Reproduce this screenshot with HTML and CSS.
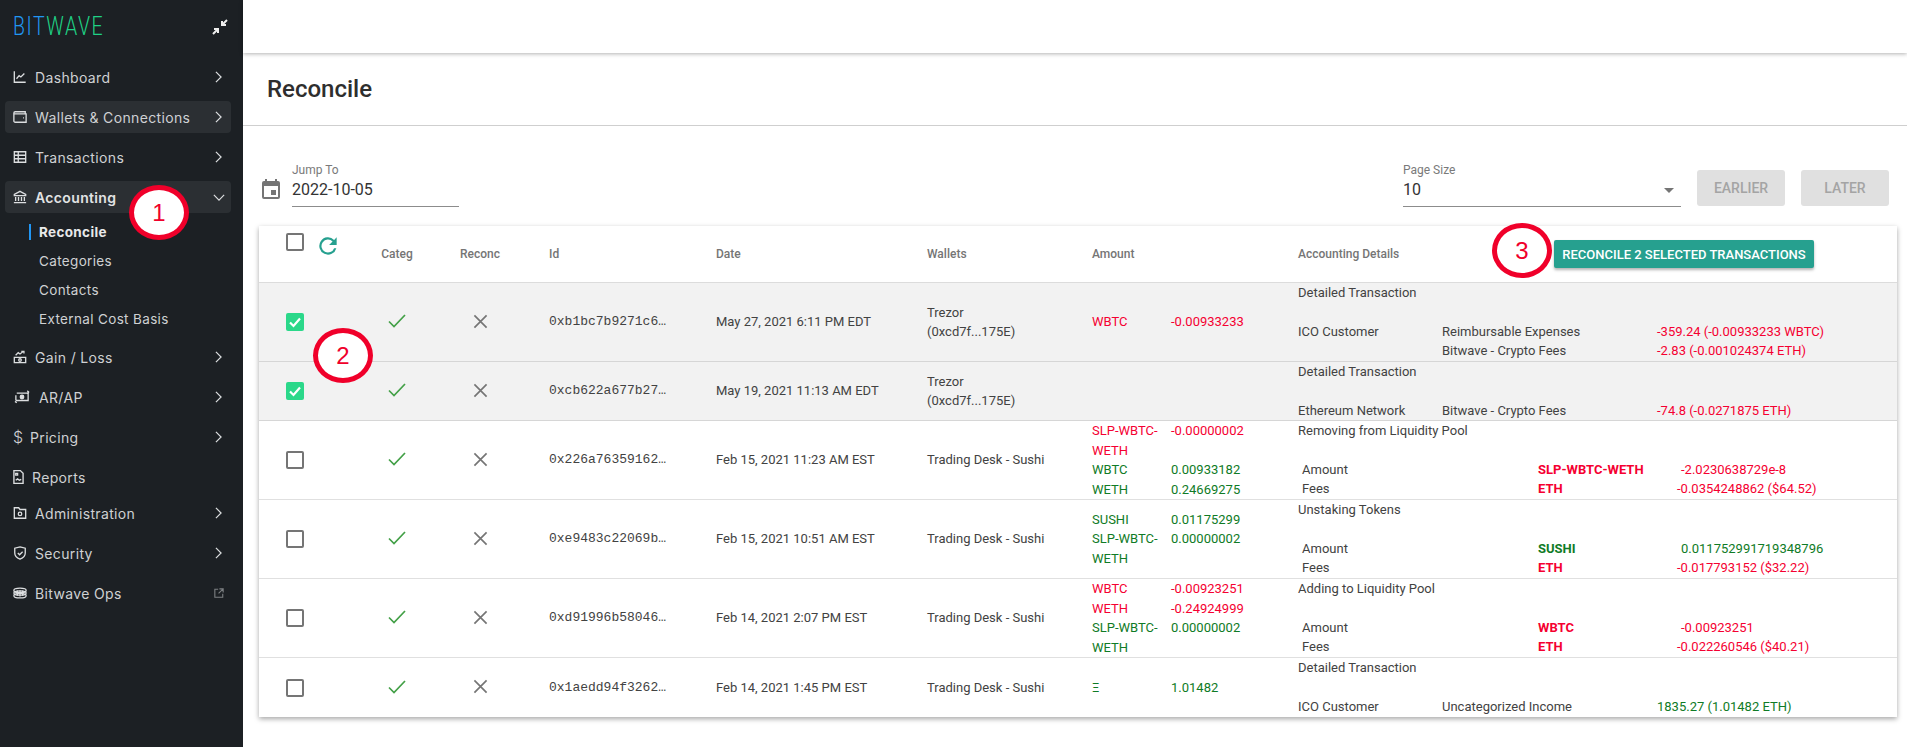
FILE: index.html
```html
<!DOCTYPE html>
<html lang="en">
<head>
<meta charset="utf-8">
<title>Reconcile</title>
<link rel="stylesheet" href="styles.css">
</head>
<body>
<div class="app">
  <aside class="sidebar">
    <div class="brand">
      <span class="logo"><span class="logo-blue">BIT</span><span class="logo-green">WAVE</span></span>
      <svg class="collapse" viewBox="0 0 16 16"><path d="M15 1 10.500 5.500M10 2v4h4M1 15l4.500-4.500M6 14v-4H2"/></svg>
    </div>
    <nav class="nav">
      <a class="item">
        <svg class="ico" viewBox="0 0 16 16"><path d="M1.500 1.500v12.500h13M4 10l3-3.500 2 1.500 4-4"/></svg>
        <span class="label">Dashboard</span><svg class="chev" viewBox="0 0 8 14"><path d="M1 1l6 6-6 6"/></svg>
      </a>
      <a class="item hl">
        <svg class="ico" viewBox="0 0 16 16"><path d="M2.500 2h11.500v2.500h1V14H2.500A1.500 1.500 0 0 1 1 12.500V3.500A1.500 1.500 0 0 1 2.500 2zM1.500 4.500h13M11.500 9h1"/></svg>
        <span class="label">Wallets &amp; Connections</span><svg class="chev" viewBox="0 0 8 14"><path d="M1 1l6 6-6 6"/></svg>
      </a>
      <a class="item">
        <svg class="ico" viewBox="0 0 16 16"><path d="M1.500 2h13v12h-13zM1.500 6h13M1.500 10h13M6 2v12"/></svg>
        <span class="label">Transactions</span><svg class="chev" viewBox="0 0 8 14"><path d="M1 1l6 6-6 6"/></svg>
      </a>
      <a class="item hl active">
        <svg class="ico" viewBox="0 0 16 16"><path d="M8 1.500 14.500 5v1.500h-13V5zM1 14.500h14M3 8v4.500M6.300 8v4.500M9.700 8v4.500M13 8v4.500"/></svg>
        <span class="label">Accounting</span><svg class="chev-down" viewBox="0 0 14 8"><path d="M1 1l6 6 6-6"/></svg>
      </a>
      <div class="sub">
        <a class="sub-item current"><span class="sub-mark">Reconcile</span></a>
        <a class="sub-item"><span class="sub-text">Categories</span></a>
        <a class="sub-item"><span class="sub-text">Contacts</span></a>
        <a class="sub-item"><span class="sub-text">External Cost Basis</span></a>
      </div>
      <a class="item">
        <svg class="ico" viewBox="0 0 16 16"><path d="M1.500 8.500h13v6h-13zM3 6l3-3 2 1.500 4-3M9.500 1.500H12.500V4"/><circle cx="8" cy="11.500" r="1.500"/></svg>
        <span class="label">Gain / Loss</span><svg class="chev" viewBox="0 0 8 14"><path d="M1 1l6 6-6 6"/></svg>
      </a>
      <a class="item">
        <svg class="ico wide" viewBox="0 0 18 16"><path d="M3 3.500h13v8.500H2M2 12V6M16 10V3.500"/><path d="M1 13l2 1.500M15 1l2 1.500M15 4l2-1.500"/><circle class="dot" cx="9" cy="8" r="2"/></svg>
        <span class="label">AR/AP</span><svg class="chev" viewBox="0 0 8 14"><path d="M1 1l6 6-6 6"/></svg>
      </a>
      <a class="item">
        <span class="dollar">$</span>
        <span class="label">Pricing</span><svg class="chev" viewBox="0 0 8 14"><path d="M1 1l6 6-6 6"/></svg>
      </a>
      <a class="item reports">
        <svg class="ico narrow" viewBox="0 0 12 16"><path d="M1 1h7l3 3v11H1zM3 11.500l2-1.500 2 1.500 2-1M3 4h2v2H3z"/></svg>
        <span class="label">Reports</span>
      </a>
      <a class="item">
        <svg class="ico" viewBox="0 0 16 16"><path d="M1.500 2h5l1.500 2h6.500v10h-13z"/><circle cx="8" cy="9" r="2"/></svg>
        <span class="label">Administration</span><svg class="chev" viewBox="0 0 8 14"><path d="M1 1l6 6-6 6"/></svg>
      </a>
      <a class="item">
        <svg class="ico" viewBox="0 0 16 16"><path d="M8 1l6 1.500v5.500c0 3.500-3 5.800-6 7-3-1.200-6-3.500-6-7V2.500zM5.500 8l2 2 3.500-3.500"/></svg>
        <span class="label">Security</span><svg class="chev" viewBox="0 0 8 14"><path d="M1 1l6 6-6 6"/></svg>
      </a>
      <a class="item">
        <svg class="ico" viewBox="0 0 16 16"><ellipse cx="8" cy="5" rx="7" ry="2.500"/><ellipse cx="8" cy="8" rx="7" ry="2.500"/><ellipse cx="8" cy="11" rx="7" ry="2.500"/><path d="M5 5v6M8 5v7M11 5v6"/></svg>
        <span class="label">Bitwave Ops</span><svg class="ext" viewBox="0 0 12 12"><path d="M5 1.500H1v9.500h9.500V7M6.500 1h4.500v4.500M11 1 5.500 6.500"/></svg>
      </a>
    </nav>
  </aside>

  <main class="main">
    <div class="topbar"></div>
    <h1 class="title">Reconcile</h1>
    <div class="filters">
      <svg class="cal" viewBox="0 0 18 20"><path d="M3 0h2v2h8V0h2v2h1a2 2 0 0 1 2 2v14a2 2 0 0 1-2 2H2a2 2 0 0 1-2-2V4a2 2 0 0 1 2-2h1zM2 7v11h14V7zM9 11h5v5H9z" fill-rule="evenodd"/></svg>
      <div class="field date-field">
        <span class="field-label">Jump To</span>
        <span class="field-value">2022-10-05</span>
      </div>
      <div class="field size-field">
        <span class="field-label">Page Size</span>
        <span class="field-value">10<span class="caret"></span></span>
      </div>
      <button class="btn-off btn-earlier">EARLIER</button>
      <button class="btn-off">LATER</button>
    </div>

    <section class="card">
      <table class="grid">
        <colgroup>
          <col class="c-sel"><col class="c-cat"><col class="c-rec"><col class="c-id"><col class="c-date"><col class="c-wal"><col class="c-amt"><col class="c-det">
        </colgroup>
        <thead>
          <tr>
            <th class="th-sel"><div class="sel-head"><span class="box"></span>
              <svg class="refresh" viewBox="0 0 24 24"><path d="M17.650 6.350A8 8 0 1 0 19.730 14h-2.080a6 6 0 1 1-1.410-6.240L13 11h7V4z"/></svg></div></th>
            <th class="center">Categ</th>
            <th class="center">Reconc</th>
            <th class="th-id">Id</th>
            <th>Date</th>
            <th>Wallets</th>
            <th>Amount</th>
            <th><div class="det-head"><span class="det-head-label">Accounting Details</span><button class="btn-main">RECONCILE 2 SELECTED TRANSACTIONS</button></div></th>
          </tr>
        </thead>
        <tbody>
          <tr class="selected">
            <td><span class="box on"><svg viewBox="0 0 18 18"><path d="M4 9.500l3.500 3.500L14 5.500"/></svg></span></td>
            <td class="center"><svg class="yes" viewBox="0 0 18 14"><path d="M1 7.500l5 5L17 1"/></svg></td>
            <td class="center"><svg class="no" viewBox="0 0 16 16"><path d="M1.500 1.500l13 13M14.500 1.500l-13 13"/></svg></td>
            <td class="mono">0xb1bc7b9271c6…</td>
            <td>May 27, 2021 6:11 PM EDT</td>
            <td>Trezor<br>(0xcd7f...175E)</td>
            <td><div class="amts neg"><span>WBTC</span><span>-0.00933233</span></div></td>
            <td class="det">
              <div class="det-title">Detailed Transaction</div>
              <div class="det-lines"><span>ICO Customer</span><span>Reimbursable Expenses</span><span class="neg">-359.24 (-0.00933233 WBTC)</span>
              <span></span><span>Bitwave - Crypto Fees</span><span class="neg">-2.83 (-0.001024374 ETH)</span></div>
            </td>
          </tr>
          <tr class="selected short">
            <td><span class="box on"><svg viewBox="0 0 18 18"><path d="M4 9.500l3.500 3.500L14 5.500"/></svg></span></td>
            <td class="center"><svg class="yes" viewBox="0 0 18 14"><path d="M1 7.500l5 5L17 1"/></svg></td>
            <td class="center"><svg class="no" viewBox="0 0 16 16"><path d="M1.500 1.500l13 13M14.500 1.500l-13 13"/></svg></td>
            <td class="mono">0xcb622a677b27…</td>
            <td>May 19, 2021 11:13 AM EDT</td>
            <td>Trezor<br>(0xcd7f...175E)</td>
            <td></td>
            <td class="det">
              <div class="det-title">Detailed Transaction</div>
              <div class="det-lines"><span>Ethereum Network</span><span>Bitwave - Crypto Fees</span><span class="neg">-74.8 (-0.0271875 ETH)</span></div>
            </td>
          </tr>
          <tr>
            <td><span class="box"></span></td>
            <td class="center"><svg class="yes" viewBox="0 0 18 14"><path d="M1 7.500l5 5L17 1"/></svg></td>
            <td class="center"><svg class="no" viewBox="0 0 16 16"><path d="M1.500 1.500l13 13M14.500 1.500l-13 13"/></svg></td>
            <td class="mono">0x226a76359162…</td>
            <td>Feb 15, 2021 11:23 AM EST</td>
            <td>Trading Desk - Sushi</td>
            <td><div class="amts neg"><span>SLP-WBTC-WETH</span><span>-0.00000002</span></div>
                <div class="amts pos"><span>WBTC</span><span>0.00933182</span><span>WETH</span><span>0.24669275</span></div></td>
            <td class="det">
              <div class="det-title">Removing from Liquidity Pool</div>
              <div class="det-swap"><span>Amount</span><b class="neg">SLP-WBTC-WETH</b><span class="neg val">-2.0230638729e-8</span>
              <span>Fees</span><b class="neg">ETH</b><span class="neg">-0.0354248862 ($64.52)</span></div>
            </td>
          </tr>
          <tr>
            <td><span class="box"></span></td>
            <td class="center"><svg class="yes" viewBox="0 0 18 14"><path d="M1 7.500l5 5L17 1"/></svg></td>
            <td class="center"><svg class="no" viewBox="0 0 16 16"><path d="M1.500 1.500l13 13M14.500 1.500l-13 13"/></svg></td>
            <td class="mono">0xe9483c22069b…</td>
            <td>Feb 15, 2021 10:51 AM EST</td>
            <td>Trading Desk - Sushi</td>
            <td><div class="amts pos"><span>SUSHI</span><span>0.01175299</span><span>SLP-WBTC-WETH</span><span>0.00000002</span></div></td>
            <td class="det">
              <div class="det-title">Unstaking Tokens</div>
              <div class="det-swap"><span>Amount</span><b class="pos">SUSHI</b><span class="pos val">0.011752991719348796</span>
              <span>Fees</span><b class="neg">ETH</b><span class="neg">-0.017793152 ($32.22)</span></div>
            </td>
          </tr>
          <tr>
            <td><span class="box"></span></td>
            <td class="center"><svg class="yes" viewBox="0 0 18 14"><path d="M1 7.500l5 5L17 1"/></svg></td>
            <td class="center"><svg class="no" viewBox="0 0 16 16"><path d="M1.500 1.500l13 13M14.500 1.500l-13 13"/></svg></td>
            <td class="mono">0xd91996b58046…</td>
            <td>Feb 14, 2021 2:07 PM EST</td>
            <td>Trading Desk - Sushi</td>
            <td><div class="amts neg"><span>WBTC</span><span>-0.00923251</span><span>WETH</span><span>-0.24924999</span></div>
                <div class="amts pos"><span>SLP-WBTC-WETH</span><span>0.00000002</span></div></td>
            <td class="det">
              <div class="det-title">Adding to Liquidity Pool</div>
              <div class="det-swap"><span>Amount</span><b class="neg">WBTC</b><span class="neg val">-0.00923251</span>
              <span>Fees</span><b class="neg">ETH</b><span class="neg">-0.022260546 ($40.21)</span></div>
            </td>
          </tr>
          <tr class="short last">
            <td><span class="box"></span></td>
            <td class="center"><svg class="yes" viewBox="0 0 18 14"><path d="M1 7.500l5 5L17 1"/></svg></td>
            <td class="center"><svg class="no" viewBox="0 0 16 16"><path d="M1.500 1.500l13 13M14.500 1.500l-13 13"/></svg></td>
            <td class="mono">0x1aedd94f3262…</td>
            <td>Feb 14, 2021 1:45 PM EST</td>
            <td>Trading Desk - Sushi</td>
            <td><div class="amts pos"><span>Ξ</span><span>1.01482</span></div></td>
            <td class="det">
              <div class="det-title">Detailed Transaction</div>
              <div class="det-lines"><span>ICO Customer</span><span>Uncategorized Income</span><span class="pos">1835.27 (1.01482 ETH)</span></div>
            </td>
          </tr>
        </tbody>
      </table>
    </section>
  </main>
</div>
<div class="callout callout-1">1</div>
<div class="callout callout-2">2</div>
<div class="callout callout-3">3</div>
</body>
</html>
```
FILE: styles.css
```css
* { box-sizing: border-box; }
html, body { margin: 0; height: 747px; overflow: hidden; background: #fff; }
body { font-family: Roboto, "Liberation Sans", sans-serif; font-size: 13px; color: #424242; }
.app { display: flex; height: 747px; }

/* Sidebar */
.sidebar { width: 243px; flex: none; background: #1c2024; color: #cfd1d3; font-family: "Inter", "Noto Sans", sans-serif; font-size: 14px; padding: 0 12px 0 5px; }
.brand { height: 57px; display: flex; align-items: flex-start; justify-content: space-between; padding: 15px 3px 0 8px; }
.logo { display: block; font-family: Roboto, sans-serif; font-weight: 300; font-size: 25px; line-height: 24px; letter-spacing: 2px; transform: scaleX(.78); transform-origin: left center; white-space: nowrap; }
.logo-blue { color: #2196f3; }
.logo-green { color: #1fd286; }
.collapse { width: 16px; height: 16px; margin: 4px 0 0; fill: none; stroke: #eee; stroke-width: 2; }
.nav { display: flex; flex-direction: column; }
.item { height: 32px; flex: none; margin: 4px 0; border-radius: 4px; display: flex; align-items: center; padding: 0 9px 0 8px; letter-spacing: .35px; }
.item.hl { background: #2b2f33; }
.item.active { font-weight: 600; color: #e2e3e4; }
.item.reports { margin-bottom: 0; }
.label { flex: 1; margin-left: 8px; }
.ico { width: 14px; height: 14px; flex: none; fill: none; stroke: #dcdee0; stroke-width: 1.500; }
.ico .dot { fill: #dcdee0; }
.ico.wide { width: 18px; }
.ico.narrow { width: 11px; height: 16px; }
.dollar { width: 9px; font-size: 16px; font-weight: 300; }
.chev { width: 7px; height: 12px; flex: none; fill: none; stroke: #dcdee0; stroke-width: 1.400; }
.chev-down { width: 12px; height: 7px; margin-right: -3px; flex: none; fill: none; stroke: #dcdee0; stroke-width: 1.400; }
.ext { width: 10px; height: 10px; flex: none; fill: none; stroke: #7d8083; stroke-width: 1.300; margin-right: -2px; }
.sub { display: flex; flex-direction: column; padding-bottom: 4px; }
.sub-item { height: 29px; flex: none; display: flex; align-items: center; padding-left: 24px; font-size: 13.500px; letter-spacing: .35px; }
.sub-text { padding-left: 10px; }
.sub-mark { border-left: 2px solid #2196f3; padding-left: 8px; line-height: 16px; font-weight: 700; color: #e8e9ea; }

/* Main */
.main { flex: 1; min-width: 0; display: flex; flex-direction: column; }
.topbar { height: 53px; flex: none; background: #fff; box-shadow: 0 1px 4px rgba(0,0,0,.3); }
.title { margin: 0; padding: 20px 0 0 24px; height: 73px; font-size: 24px; font-weight: 500; line-height: 32px; color: #2e2e2e; border-bottom: 1px solid #cfcfcf; flex: none; }
.filters { display: flex; align-items: flex-start; padding: 36px 0 0 19px; height: 100px; flex: none; }
.cal { width: 18px; height: 20px; margin: 17px 12px 0 0; fill: #757575; flex: none; }
.field { display: flex; flex-direction: column; border-bottom: 1px solid #8c8c8c; height: 45px; }
.date-field { width: 167px; }
.size-field { width: 278px; margin-left: 944px; }
.field-label { font-size: 12px; line-height: 16px; color: #7a7a7a; }
.field-value { font-size: 16px; line-height: 24px; color: #333; display: flex; justify-content: space-between; align-items: center; }
.caret { width: 0; height: 0; border-left: 5px solid transparent; border-right: 5px solid transparent; border-top: 5px solid #757575; margin-right: 7px; }
.btn-off { width: 88px; height: 36px; margin: 8px 0 0 16px; border: 0; border-radius: 3px; background: #e0e0e0; color: #a4a4a4; font: 500 14px Roboto, sans-serif; padding: 0; }

/* Table */
.card { margin: 0 10px 0 16px; background: #fff; box-shadow: 0 2px 5px rgba(0,0,0,.35); }
.grid { width: 100%; border-collapse: separate; border-spacing: 0; table-layout: fixed; }
.c-sel { width: 98px; }
.c-cat { width: 80px; }
.c-rec { width: 86px; }
.c-id { width: 168px; }
.c-date { width: 211px; }
.c-wal { width: 165px; }
.c-amt { width: 206px; }
th { height: 57px; padding: 0 0 0 25px; text-align: left; font-size: 12px; font-weight: 500; color: #757575; border-bottom: 1px solid #dcdcdc; }
td { height: 79px; padding: 0 0 0 25px; line-height: 19.500px; border-bottom: 1px solid #e0e0e0; vertical-align: middle; color: #424242; }
tr.short td { height: 59px; }
tr.selected td { background: #f2f2f2; border-bottom-color: #d6d6d6; }
tr.last td { border-bottom: 0; }
th.center, td.center { text-align: center; padding-left: 0; }
th.th-id { padding-left: 26px; }
th.th-sel { padding: 0 0 0 27px; vertical-align: top; }
td:first-child { padding-left: 27px; }
.sel-head { display: flex; align-items: flex-start; padding-top: 7px; gap: 11px; }
.box { display: block; width: 18px; height: 18px; border: 2px solid #757575; border-radius: 2px; }
.box.on { background: #2bd88a; border: 0; }
.box svg { display: block; width: 18px; height: 18px; fill: none; stroke: #fff; stroke-width: 2.200; }
.refresh { width: 26px; height: 26px; fill: #26a08f; }
.yes { display: block; width: 18px; height: 14px; margin: -2px auto 0; fill: none; stroke: #43a047; stroke-width: 1.700; }
.no { display: block; width: 15px; height: 15px; margin: -2px auto 0; fill: none; stroke: #757575; stroke-width: 1.800; }
.mono { font-family: "Liberation Mono", monospace; font-size: 13px; white-space: nowrap; padding-left: 26px; }
.neg { color: #f50031; }
.pos { color: #0f7b26; }
.amts { display: grid; grid-template-columns: 79px 1fr; }
.amts span:nth-child(odd) { padding-right: 12px; overflow-wrap: anywhere; }
.det-head { display: flex; align-items: center; }
.det-head-label { width: 256px; flex: none; }
.btn-main { width: 260px; height: 28px; padding: 0; border: 0; border-radius: 2px; background: #26a08f; color: #fff; font: 500 13px Roboto, sans-serif; box-shadow: 0 2px 3px rgba(0,0,0,.3); white-space: nowrap; }
.det { vertical-align: top; }
.det-title { height: 38.500px; }
.det-lines { display: grid; grid-template-columns: 144px 215px 1fr; }
.det-swap { display: grid; grid-template-columns: 236px 139px 1fr; padding-left: 4px; }
.det-swap b { font-weight: 700; }
.val { padding-left: 4px; }

/* Numbered callouts over the screenshot */
.callout { position: absolute; width: 60px; height: 55px; border: 5px solid #f0002a; border-radius: 50%; background: #fff; color: #f0002a; font: 24px/45px "Liberation Sans", sans-serif; text-align: center; }
.callout-1 { left: 129px; top: 185px; }
.callout-2 { left: 313px; top: 328px; }
.callout-3 { left: 1492px; top: 223px; }
```
